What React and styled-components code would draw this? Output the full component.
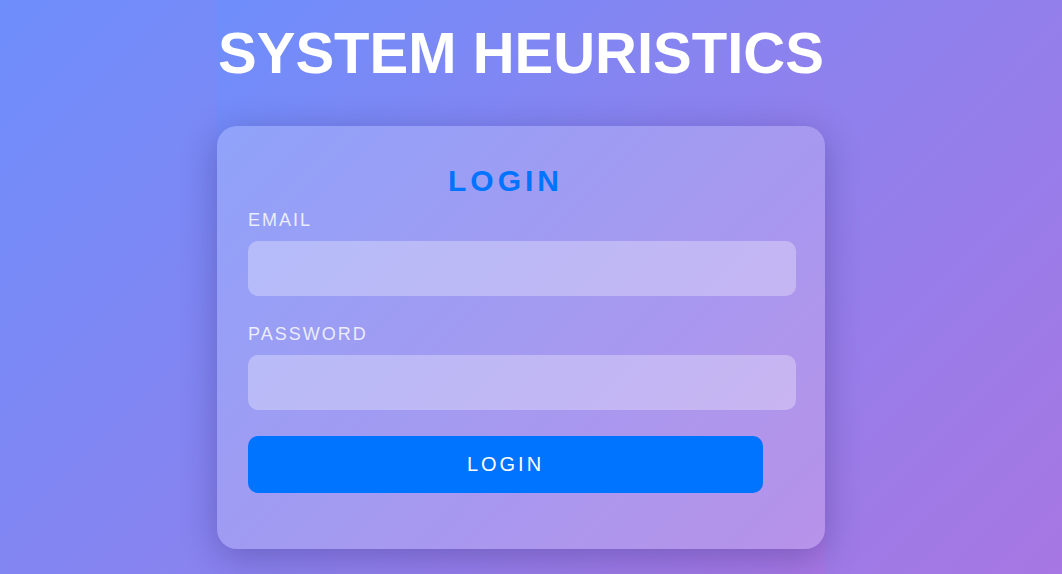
import styled, { createGlobalStyle } from 'styled-components';

const GlobalStyle = createGlobalStyle`
  * {
    box-sizing: border-box;
  }
  html, body {
    margin: 0;
    padding: 0;
    height: 100%;
  }
  body {
    font-family: "Liberation Sans", Arial, sans-serif;
    background: linear-gradient(135deg, #6e8efb, #a777e3);
    overflow: hidden;
  }
`;

const Page = styled.div`
  display: flex;
  justify-content: center;
  min-height: 100vh;
  padding-right: 20px;
`;

const Column = styled.div`
  width: 608px;
  min-height: 100vh;
  display: flex;
  flex-direction: column;
  background: linear-gradient(135deg, #6e8efb, #a777e3);
`;

const Title = styled.h1`
  margin: 20px 0 40px;
  font-size: 58px;
  font-weight: 700;
  line-height: 66px;
  color: #fff;
  text-align: center;
  white-space: nowrap;
`;

const Card = styled.div`
  width: 100%;
  padding: 37px 62px 56px 31px;
  border-radius: 20px;
  background: rgba(255, 255, 255, 0.2);
  box-shadow: 0 8px 36px rgba(30, 20, 90, 0.3);
`;

const CardTitle = styled.h2`
  margin: 0 0 12px;
  font-size: 30px;
  line-height: 35px;
  font-weight: 700;
  letter-spacing: 4px;
  color: #0073ff;
  text-align: center;
`;

const Field = styled.div`
  display: flex;
  flex-direction: column;
  margin-bottom: ${p => p.$gap}px;
`;

const Label = styled.label`
  font-size: 18px;
  line-height: 21px;
  letter-spacing: 2px;
  color: rgba(255, 255, 255, 0.82);
  margin-bottom: 10px;
`;

const Input = styled.input`
  width: 548px;
  height: 55px;
  border: none;
  border-radius: 10px;
  padding: 0 15px;
  font-size: 16px;
  background: rgba(255, 255, 255, 0.3);
  color: #fff;
  outline: none;
`;

const Button = styled.button`
  width: 100%;
  height: 57px;
  border: none;
  border-radius: 10px;
  background: #0073ff;
  color: #fff;
  font-family: inherit;
  font-size: 20px;
  letter-spacing: 3px;
  cursor: pointer;
`;

export default function App() {
  return (
    <>
      <GlobalStyle />
      <Page>
        <Column>
          <Title>SYSTEM HEURISTICS</Title>
          <Card>
            <CardTitle>LOGIN</CardTitle>
            <Field $gap={28}>
              <Label htmlFor="email">EMAIL</Label>
              <Input id="email" type="email" />
            </Field>
            <Field $gap={26}>
              <Label htmlFor="password">PASSWORD</Label>
              <Input id="password" type="password" />
            </Field>
            <Button type="button">LOGIN</Button>
          </Card>
        </Column>
      </Page>
    </>
  );
}
